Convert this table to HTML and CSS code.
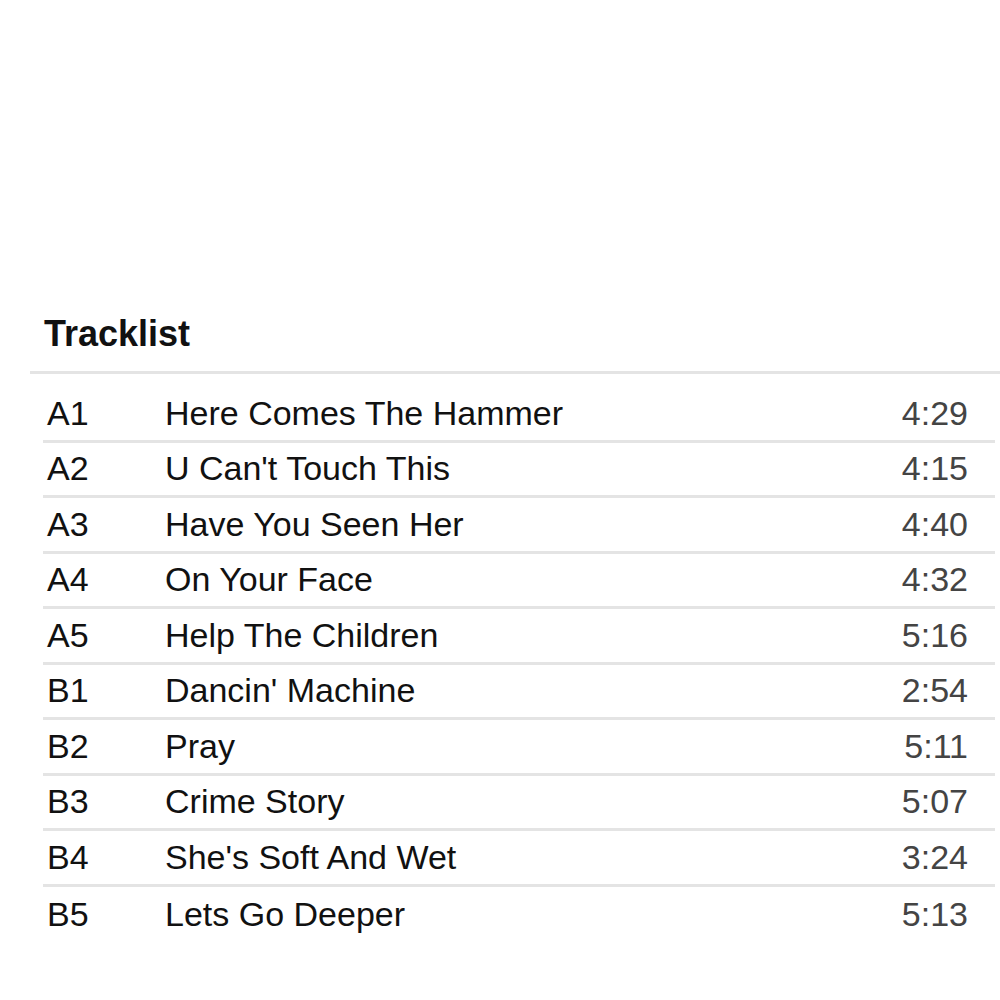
FILE: index.html
```html
<!DOCTYPE html>
<html lang="en">
<head>
    <meta charset="UTF-8">
    <title>Tracklist</title>
    <link rel="stylesheet" href="styles.css">
</head>
<body>
<section class="tracklist">
    <h2 class="tracklist-title">Tracklist</h2>
    <div class="tracks">
        <div class="track"><span class="pos">A1</span><span class="name">Here Comes The Hammer</span><span class="dur">4:29</span></div>
        <div class="track"><span class="pos">A2</span><span class="name">U Can't Touch This</span><span class="dur">4:15</span></div>
        <div class="track"><span class="pos">A3</span><span class="name">Have You Seen Her</span><span class="dur">4:40</span></div>
        <div class="track"><span class="pos">A4</span><span class="name">On Your Face</span><span class="dur">4:32</span></div>
        <div class="track"><span class="pos">A5</span><span class="name">Help The Children</span><span class="dur">5:16</span></div>
        <div class="track"><span class="pos">B1</span><span class="name">Dancin' Machine</span><span class="dur">2:54</span></div>
        <div class="track"><span class="pos">B2</span><span class="name">Pray</span><span class="dur">5:11</span></div>
        <div class="track"><span class="pos">B3</span><span class="name">Crime Story</span><span class="dur">5:07</span></div>
        <div class="track"><span class="pos">B4</span><span class="name">She's Soft And Wet</span><span class="dur">3:24</span></div>
        <div class="track"><span class="pos">B5</span><span class="name">Lets Go Deeper</span><span class="dur">5:13</span></div>
    </div>
</section>
</body>
</html>
```

FILE: styles.css
```css
* {
    margin: 0;
    padding: 0;
    box-sizing: border-box;
    font-family: "Liberation Sans", Arial, sans-serif;
}

body {
    background: #fff;
    color: #111;
    padding-top: 312px;
}

/* Titulo */
.tracklist-title {
    font-size: 36px;
    font-weight: bold;
    padding-left: 44px;
    line-height: 44px;
    padding-bottom: 15px;
}

.tracks {
    margin-left: 30px;
    border-top: 3px solid #e4e4e4;
    padding-top: 13px;
}

/* Linhas */
.track {
    display: flex;
    align-items: center;
    height: 55.5px;
    margin-left: 13px;
    margin-right: 5px;
    font-size: 34px;
    border-bottom: 3px solid #e4e4e4;
}

.track:last-child {
    border-bottom: none;
}

.pos {
    width: 122px;
    padding-left: 4px;
}

.name {
    flex: 1;
}

.dur {
    color: #444;
    padding-right: 27px;
}
```
